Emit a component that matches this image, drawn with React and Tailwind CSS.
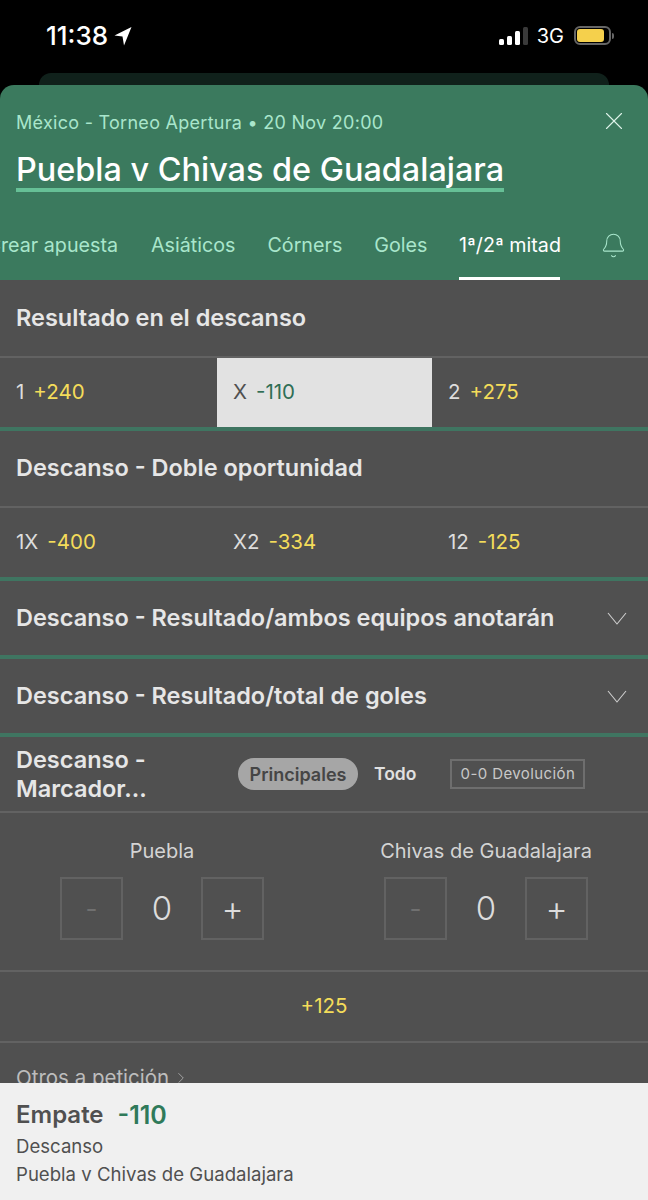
import { X, Bell, ChevronRight } from 'lucide-react';

const fullTime = [
  { label: '1', odds: '+240' },
  { label: 'X', odds: '-110', selected: true },
  { label: '2', odds: '+275' },
];

const doubleChance = [
  { label: '1X', odds: '-400' },
  { label: 'X2', odds: '-334' },
  { label: '12', odds: '-125' },
];

const tabs = ['Asiáticos', 'Córners', 'Goles'];

const SectionTitle = ({ children }) => (
  <div className="h-[75px] flex items-center pb-[2px] px-4 text-[23.5px] font-semibold text-[#e6e6e6]">{children}</div>
);

const OddsRow = ({ items }) => (
  <div className="h-[75px] border-t-2 border-[#626262] border-b-4 border-b-[#3f7561] grid grid-cols-[217px_215px_216px]">
    {items.map((item) => (
      <div
        key={item.label}
        className={`flex items-center gap-[9px] text-[20.5px] pl-[16px] ${item.selected ? 'bg-[#e2e2e2] text-[#505050]' : 'text-[#dddddd]'}`}
      >
        <span>{item.label}</span>
        <span className={item.selected ? 'text-[#2f6e55]' : 'text-[#f4dc5a]'}>{item.odds}</span>
      </div>
    ))}
  </div>
);

const CollapsedRow = ({ title }) => (
  <div className="h-[78px] border-b-4 border-[#3f7561] flex items-center justify-between pl-4 pr-[21px] text-[23.5px] font-semibold text-[#e6e6e6]">
    <span>{title}</span>
    <svg width="20" height="13" viewBox="0 0 20 13" fill="none" stroke="#cfcfcf" strokeWidth="1.1">
      <path d="M1 1 L10 12 L19 1" />
    </svg>
  </div>
);

const Stepper = ({ team }) => (
  <div className="flex flex-col items-center w-[204px]">
    <div className="text-[20px] text-[#d4d4d4] whitespace-nowrap h-[28px] leading-[28px]">{team}</div>
    <div className="mt-[12px] flex items-center">
      <div className="w-[63px] h-[63px] border-2 border-[#626262] flex items-center justify-center text-[26px] text-[#707070]">-</div>
      <div className="w-[78px] text-center text-[33px] font-light text-[#dcdcdc]">0</div>
      <div className="w-[63px] h-[63px] border-2 border-[#626262] flex items-center justify-center text-[34px] font-light text-[#dcdcdc]">+</div>
    </div>
  </div>
);

export default function App() {
  return (
    <div className="w-[648px] h-[1200px] overflow-hidden flex flex-col bg-black font-['Inter','Noto_Sans',sans-serif]">
      {/* status bar */}
      <div className="h-[73px] flex items-center justify-between pb-[2px] pl-[46px] pr-[34px] text-white shrink-0">
        <div className="flex items-center gap-[6px] text-[26px] font-medium leading-none">
          <span>11:38</span>
          <svg width="18" height="20" viewBox="0 0 18 20" fill="white">
            <path d="M17.5 1 L0.5 9.5 L8.5 10.5 L10 19.5 Z" />
          </svg>
        </div>
        <div className="flex items-center">
          <div className="flex items-end gap-[3px] h-[18px]">
            <div className="w-[5px] h-[6px] bg-white rounded-[1.5px]" />
            <div className="w-[5px] h-[9px] bg-white rounded-[1.5px]" />
            <div className="w-[5px] h-[14px] bg-white rounded-[1.5px]" />
            <div className="w-[5px] h-[18px] bg-[#3a3a3a] rounded-[1.5px]" />
          </div>
          <span className="ml-[9px] text-[20px] leading-none">3G</span>
          <div className="ml-[10px] w-[37px] h-[19px] border-2 border-[#666666] rounded-[6px] pl-[1px] pr-[5px] py-[1px]">
            <div className="w-full h-full bg-[#f5d04c] rounded-[3px]" />
          </div>
          <div className="ml-[1px] w-[2px] h-[6px] bg-[#666666] rounded-r-sm" />
        </div>
      </div>
      <div className="h-[12px] mx-[39px] rounded-t-xl bg-[#10211b] shrink-0" />

      {/* match header */}
      <div className="h-[195px] bg-[#3b7a5e] rounded-t-[14px] shrink-0 flex flex-col">
        <div className="flex items-center justify-between pt-[24px] pl-4 pr-[19px] h-[50px]">
          <span className="text-[18px] text-[#a9e6cc] tracking-[0.28px]">México - Torneo Apertura • 20 Nov 20:00</span>
          <X size={30} strokeWidth={0.9} className="text-[#dff3ea] -mt-[2px]" />
        </div>
        <div className="px-4 mt-[16px]">
          <span className="inline-block text-[32.4px] leading-[37px] font-medium text-white border-b-[4px] border-[#66c096] whitespace-nowrap">
            Puebla v Chivas de Guadalajara
          </span>
        </div>
        <div className="mt-auto h-[64px] flex items-stretch text-[19.7px] text-[#a9e6cc] whitespace-nowrap">
          <div className="w-[118px] overflow-hidden flex justify-end items-center shrink-0 pb-[4px]">
            <span>Crear apuesta</span>
          </div>
          <div className="flex items-center gap-[32px] ml-[33px] pb-[4px]">
            {tabs.map((tab) => (
              <span key={tab}>{tab}</span>
            ))}
          </div>
          <div className="ml-[32px] w-[101px] flex items-center justify-center text-white border-b-[3px] border-white pb-[1px]">1ª/2ª mitad</div>
          <Bell size={27} strokeWidth={0.9} className="ml-[40px] self-center mb-[6px] text-[#a9e6cc]" />
        </div>
      </div>

      {/* markets */}
      <div className="flex-1 overflow-hidden bg-[#505050] pt-[1px]">
        <SectionTitle>Resultado en el descanso</SectionTitle>
        <OddsRow items={fullTime} />
        <SectionTitle>Descanso - Doble oportunidad</SectionTitle>
        <OddsRow items={doubleChance} />
        <CollapsedRow title="Descanso - Resultado/ambos equipos anotarán" />
        <CollapsedRow title="Descanso - Resultado/total de goles" />

        <div className="h-[76px] flex items-center pl-4 border-b-2 border-[#626262]">
          <div className="w-[222px] text-[23.5px] leading-[29px] font-semibold text-[#e6e6e6]">
            Descanso -<br />Marcador...
          </div>
          <div className="h-[32px] w-[120px] rounded-full bg-[#a6a6a6] flex items-center justify-center text-[18px] font-semibold text-[#454545]">Principales</div>
          <div className="ml-[16px] text-[17.5px] font-semibold text-[#e0e0e0]">Todo</div>
          <div className="ml-[34px] w-[135px] h-[30px] border-2 border-[#6e6e6e] flex items-center justify-center text-[15px] tracking-[0.4px] text-[#c8c8c8]">0-0 Devolución</div>
        </div>

        <div className="h-[159px] border-b-2 border-[#626262] pt-[24px] pl-[60px] flex gap-[120px]">
          <Stepper team="Puebla" />
          <Stepper team="Chivas de Guadalajara" />
        </div>

        <div className="h-[71px] border-b-2 border-[#626262] flex items-center justify-center text-[20.5px] text-[#f4dc5a]">+125</div>

        <div className="pl-4 pt-[21px] flex items-center gap-[3px] text-[20.5px] leading-[28px] text-[#bdbdbd]">
          <span>Otros a petición</span>
          <ChevronRight size={18} strokeWidth={1} />
        </div>
      </div>

      {/* bet slip */}
      <div className="h-[117px] bg-[#f0f0f0] shrink-0 px-4 pt-[17px]">
        <div className="flex items-center gap-[14px] text-[24px] leading-[30px] font-semibold">
          <span className="text-[#505050]">Empate</span>
          <span className="text-[25px] text-[#2f7a5a]">-110</span>
        </div>
        <div className="mt-[2px] text-[18.6px] leading-[28px] text-[#505050]">Descanso</div>
        <div className="text-[18.6px] leading-[28px] text-[#505050]">Puebla v Chivas de Guadalajara</div>
      </div>
    </div>
  );
}
